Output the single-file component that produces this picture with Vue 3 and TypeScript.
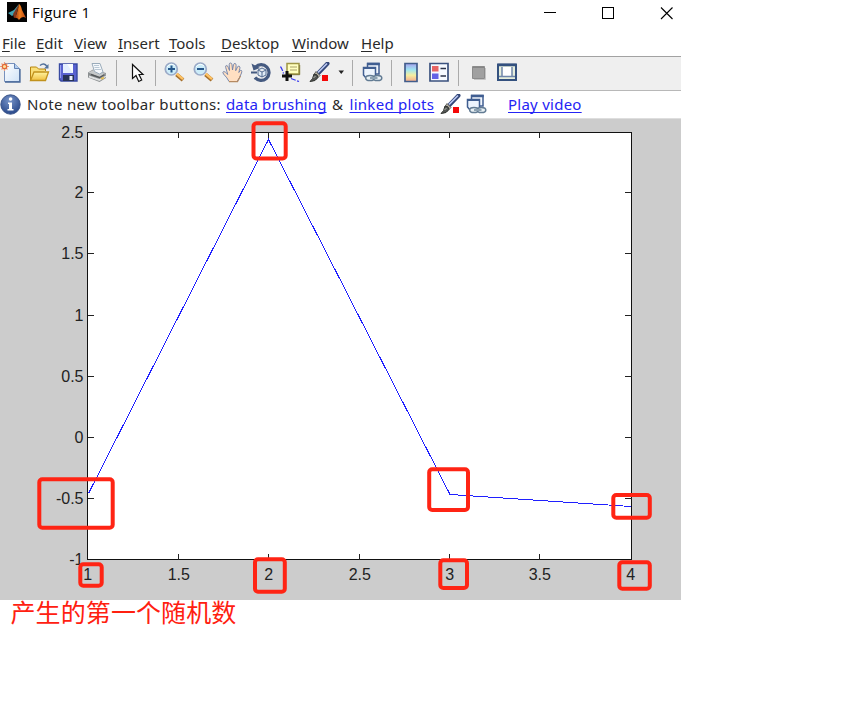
<script setup lang="ts">
interface Tool { id: string; w: number; sep?: boolean }
interface Mark { x: number; y: number; x2: number; y2: number }

const menus = [
  { label: 'File', w: 34 }, { label: 'Edit', w: 38 }, { label: 'View', w: 44 },
  { label: 'Insert', w: 51 }, { label: 'Tools', w: 52 }, { label: 'Desktop', w: 71 },
  { label: 'Window', w: 69 }, { label: 'Help', w: 40 },
]
const tools: Tool[] = [
  { id: 'new', w: 29 }, { id: 'open', w: 29 }, { id: 'save', w: 29 }, { id: 'print', w: 28 },
  { id: 's1', w: 12, sep: true }, { id: 'arrow', w: 27 }, { id: 's2', w: 10, sep: true },
  { id: 'zoomin', w: 29 }, { id: 'zoomout', w: 29 }, { id: 'hand', w: 29 }, { id: 'rotate', w: 29 },
  { id: 'cursor', w: 29 }, { id: 'brush', w: 29 }, { id: 'caret', w: 13 },
  { id: 's3', w: 11, sep: true }, { id: 'link', w: 28 }, { id: 's4', w: 10, sep: true },
  { id: 'colorbar', w: 29 }, { id: 'legend', w: 28 }, { id: 's5', w: 11, sep: true },
  { id: 'hide', w: 29 }, { id: 'dock', w: 29 },
]
const left = 87.5, right = 631.5, top = 132.5, bottom = 559.5
const xTicks = [
  { v: '1', x: 87.5 }, { v: '1.5', x: 178.5 }, { v: '2', x: 268.5 }, { v: '2.5', x: 359.5 },
  { v: '3', x: 449.5 }, { v: '3.5', x: 539.5 }, { v: '4', x: 630.5 },
]
const yTicks = [
  { v: '2.5', y: 132.5 }, { v: '2', y: 192.5 }, { v: '1.5', y: 253.5 }, { v: '1', y: 315.5 },
  { v: '0.5', y: 376.5 }, { v: '0', y: 437.5 }, { v: '-0.5', y: 498.5 }, { v: '-1', y: 559.5 },
]
const line = '88.5,493.5 268.5,139.5 450,494.5 631,506.5'
const marks: Mark[] = [
  { x: 251.5, y: 121.3, x2: 287.7, y2: 160.5 },
  { x: 37.3, y: 477.3, x2: 114.7, y2: 529.7 },
  { x: 78.3, y: 562.3, x2: 103.7, y2: 587.7 },
  { x: 253, y: 557.3, x2: 286.8, y2: 593.7 },
  { x: 427.2, y: 467.2, x2: 470, y2: 512 },
  { x: 611.3, y: 493, x2: 651.8, y2: 519.8 },
  { x: 438.3, y: 558.3, x2: 469, y2: 590 },
  { x: 617.3, y: 560.3, x2: 651.8, y2: 590.8 },
]
</script>

<template>
  <svg class="defs" width="0" height="0">
    <defs>
      <linearGradient id="g-blade" x1="0" x2="1"><stop offset="0" stop-color="#8c2a10" /><stop offset=".5" stop-color="#f0801e" /><stop offset="1" stop-color="#b8400e" /></linearGradient>
      <linearGradient id="g-paper" x1="0" y1="0" x2="1" y2="1"><stop offset="0" stop-color="#fff" /><stop offset="1" stop-color="#cfe2f7" /></linearGradient>
      <linearGradient id="g-folder" x1="0" y1="0" x2="0" y2="1"><stop offset="0" stop-color="#fff3a0" /><stop offset="1" stop-color="#f0c040" /></linearGradient>
      <linearGradient id="g-bar" x1="0" y1="0" x2="0" y2="1"><stop offset="0" stop-color="#a7a2ee" /><stop offset=".35" stop-color="#9fe6f2" /><stop offset=".65" stop-color="#f6efa0" /><stop offset="1" stop-color="#f5a98c" /></linearGradient>
      <radialGradient id="g-info" cx=".45" cy=".3" r=".7"><stop offset="0" stop-color="#7693c8" /><stop offset="1" stop-color="#29488a" /></radialGradient>
      <symbol id="new" viewBox="0 0 21 21">
        <path d="M4.5 1.5h10l5 5v13h-15z" fill="url(#g-paper)" stroke="#7791bd" /><path d="M20 7v13H5" fill="none" stroke="#486899" stroke-width="1.3" /><path d="M14.5 1.5v5h5" fill="#b3ceed" stroke="#6382b4" />
        <path d="M4.500 0v9M0 4.5h9M1.500 1.500l6 6M7.500 1.500l-6 6" stroke="#eea07e" stroke-width="1.2" /><circle cx="4.500" cy="4.500" r="2.200" fill="#ffe09a" stroke="#e0693a" stroke-width="1.300" />
      </symbol>
      <symbol id="open" viewBox="0 0 21 21">
        <path d="M1.500 18V5h6l2 2h7V9" fill="#f9df79" stroke="#b8860f" /><path d="M1.500 18.500L5 10h14.500l-3 8.500z" fill="url(#g-folder)" stroke="#c1921d" stroke-width="1.3" />
        <path d="M11 3.500q4-3.500 7 1" fill="none" stroke="#54739d" stroke-width="1.4" /><path d="M19.500 2v4.500H15z" fill="#54739d" />
      </symbol>
      <symbol id="save" viewBox="0 0 21 21">
        <path d="M1.5 2h17.5v17H3l-1.5-1.5z" fill="#5962d0" stroke="#384aa2" stroke-width="1.4" /><path d="M5 2h10v9H5z" fill="#e4efff" /><path d="M9 2h6v9z" fill="#fafdff" /><path d="M5 13h11v6H5z" fill="#273357" /><path d="M11.5 14h3v4h-3z" fill="#eef2fc" /><path d="M2.5 3v13" stroke="#979ff0" />
      </symbol>
      <symbol id="print" viewBox="0 0 21 21">
        <path d="M1 10.500l5-3 13 3.500v5l-6.500 4L1 15.500z" fill="#8b8f91" /><path d="M1.500 10.500l5-2.500 12.500 4-6 3.500z" fill="#c6c9ca" /><path d="M5 1.500h8l3 8.500-3.500 2L7.500 9.500z" fill="#f6f9fc" stroke="#9aabba" /><path d="M7 3.500h5M7.500 5.500h5M8 7.500h6" stroke="#b9c8d5" />
        <path d="M2 13.500l10.500 3.500 6.500-3.500v1.500L12.500 19 2 15.500z" fill="#dfe1e2" /><path d="M4 12.500l8.500 3 5-3" fill="none" stroke="#55595b" stroke-width="1.400" /><path d="M14 17l3-1.500" stroke="#e6bf51" stroke-width="1.600" />
      </symbol>
      <symbol id="arrow" viewBox="0 0 21 21"><path d="M5.5 2.5v14l3.5-3 2.7 6 3-1.5-2.7-5.500h4z" fill="#fff" stroke="#111" stroke-width="1.2" /></symbol>
      <symbol id="lens" viewBox="0 0 21 21">
        <path d="M12.5 12.5l6.500 5.500" stroke="#a66f2b" stroke-width="4" /><path d="M12.500 11.7l6.500 5.500" stroke="#ffc364" stroke-width="2.400" /><circle cx="7.3" cy="7" r="6" fill="#ccecf9" stroke="#9baac7" stroke-width="1.7" /><path d="M3 5q4-5 8-1" stroke="#f6ffff" fill="none" />
      </symbol>
      <symbol id="zoomin" viewBox="0 0 21 21"><use href="#lens" width="21" height="21" /><path d="M4 7h7M7.5 3.5v7" stroke="#27588c" stroke-width="2" /></symbol>
      <symbol id="zoomout" viewBox="0 0 21 21"><use href="#lens" width="21" height="21" /><path d="M4 7h7" stroke="#27588c" stroke-width="2" /></symbol>
      <symbol id="hand" viewBox="0 0 21 21"><path d="M7 19.500Q5.500 16 1.500 12q-1.500-2.200.3-2.500 1.400 0 4 3L3.700 5.500Q3.300 3.300 4.800 3.500q1 .2 1.500 2L7.500 8.500 7.200 2.500q.2-1.700 1.400-1.500 1.200 0 1.400 1.800L10.500 8 11.500 2.700q.4-1.500 1.600-1.200 1.200.3 1 2L13.700 8.700 15.500 5q.7-1.300 1.700-.8 1.100.6.7 2L16.800 10.500l1-1.500q1-1.200 1.700-.5.600.8 0 2.500L17.500 15.500 15 19.500z" fill="#ffdfc2" stroke="#6d7fa6" stroke-width=".9" /><path d="M7 19.700h8.500l3-5.700" fill="none" stroke="#b58a62" stroke-width="1.200" /></symbol>
      <symbol id="rotate" viewBox="0 0 21 21">
        <path d="M4.500 5A7.900 7.900 0 1 1 4 15.500" fill="none" stroke="#455a80" stroke-width="3.200" /><path d="M.5 1.500l2 7 6.500-2.500z" fill="#455a80" /><path d="M0 10.500h6" stroke="#455a80" stroke-width="2" /><path d="M11 6l4 2v5l-4 2-4-2V8zM7 8l4 2 4-2M11 10v5" fill="#e0ebf5" stroke="#526a90" />
      </symbol>
      <symbol id="cursor" viewBox="0 0 21 21">
        <path d="M.500 4.500q2 3 3 7M11 16.500l8 3" stroke="#3434f0" fill="none" stroke-width="1.3" stroke-dasharray="5 1.500" /><path d="M7 1.500h12v10.500h-12z" fill="#ffffbf" stroke="#9f9646" stroke-width="1.5" /><path d="M19.700 3v9.700H8" fill="none" stroke="#827a39" /><path d="M10 5h7M10 8h7" stroke="#a9a06a" /><path d="M7 9v10M2 14h10" stroke="#111" stroke-width="3" />
      </symbol>
      <symbol id="brush" viewBox="0 0 21 21">
        <path d="M8.500 12L18.500 1.500" stroke="#324577" stroke-width="4" stroke-linecap="round" /><path d="M9 10.500L18 1.500" stroke="#bac8f2" stroke-width="1.7" /><path d="M7 9.500l4 4-2 2-4-3z" fill="#b9b4a5" stroke="#686864" /><path d="M5 12q4 0 4 3.500-2 4-8 4 3-2 4-7.500z" fill="#535654" stroke="#30332f" /><path d="M4.500 16l2-2" stroke="#b0b5a9" /><path d="M13 13h6v6h-6z" fill="#f40808" />
      </symbol>
      <symbol id="caret" viewBox="0 0 21 21"><path d="M.5 8.500h5.500l-2.750 3.500z" fill="#222" /></symbol>
      <symbol id="link" viewBox="0 0 21 21">
        <path d="M5.500 1.500H17V12H5.500z" fill="#f1f6fc" stroke="#405e91" stroke-width="1.5" /><path d="M5 2h12.700" stroke="#405e91" stroke-width="2.500" /><path d="M1.500 5.500h12V16H4l-2.500-3z" fill="#edf4fd" stroke="#405e91" stroke-width="1.5" /><path d="M1 6h12" stroke="#405e91" stroke-width="2" />
        <ellipse cx="8" cy="16" rx="4.300" ry="2.600" fill="#e8f0f4" stroke="#627b93" stroke-width="1.500" /><ellipse cx="15.500" cy="16" rx="4.300" ry="2.600" fill="#e8f0f4" stroke="#627b93" stroke-width="1.500" /><path d="M8 16h7.500" stroke="#8da2b2" stroke-width="2" />
      </symbol>
      <symbol id="colorbar" viewBox="0 0 21 21"><path d="M5 1.500h12v18H5z" fill="url(#g-bar)" stroke="#425d8c" stroke-width="1.7" /></symbol>
      <symbol id="legend" viewBox="0 0 21 21"><path d="M1 1.500h18v17.500H1z" fill="#f5f9ff" stroke="#3b527f" stroke-width="1.700" /><path d="M3 4h6.500v5.500H3z" fill="#e66464" /><path d="M3 11.500h6.500V17H3z" fill="#6262e6" /><path d="M11.500 6.500H17M11.500 14H17" stroke="#293148" stroke-width="1.500" /></symbol>
      <symbol id="hide" viewBox="0 0 21 21"><path d="M4.500 4.500h12v12h-12z" fill="#a0a0a0" stroke="#8b8b8b" /><path d="M17.500 6v11.500H6" fill="none" stroke="#c4c4c4" /><path d="M5 5.500h11" stroke="#858585" /></symbol>
      <symbol id="dock" viewBox="0 0 21 21"><path d="M1 2.500h18v15.500H1z" fill="#e7efdc" stroke="#34517f" stroke-width="2" /><path d="M1 3h18" stroke="#34517f" stroke-width="2.500" /><path d="M5 5v9.500h10V5M2 14.500h16" fill="#fff" stroke="#7188ab" stroke-width="1.500" /></symbol>
    </defs>
  </svg>

  <main class="page">
    <section class="window">
      <header class="title">
        <svg class="logo" viewBox="0 0 20 20"><path d="M0 0h20v20H0z" fill="#030303" /><path d="M1 11l6-3 5-6-3 9-4 3z" fill="#42a2b1" /><path d="M6 12l3-5 3-5-3 12-2 2z" fill="#803920" /><path d="M12 2q2 1 3 6l4 8q-4-3-7 2-2-3-5-2 3-2 5-14z" fill="url(#g-blade)" /></svg>
        <span class="caption">Figure 1</span>
        <svg class="controls" viewBox="0 0 137 26" fill="none" stroke="#000"><path d="M0 12.500h12M58.500 7.500h11v11h-11z" shape-rendering="crispEdges" /><path d="M117 7.500l11.500 11.500M128.500 7.500L117 19" stroke-width="1.100" /></svg>
      </header>
      <nav class="menu">
        <span v-for="m in menus" :key="m.label" class="menu-item" :style="{ width: m.w + 'px' }"><u>{{ m.label[0] }}</u>{{ m.label.slice(1) }}</span>
      </nav>
      <div class="toolbar">
        <div v-for="t in tools" :key="t.id" class="slot" :style="{ width: t.w + 'px' }">
          <i v-if="t.sep" class="sep" />
          <svg v-else class="icon"><use :href="'#' + t.id" /></svg>
        </div>
      </div>
      <div class="note">
        <svg class="info" viewBox="0 0 21 21"><circle cx="10.500" cy="10.500" r="9.700" fill="url(#g-info)" stroke="#3a5489" /><circle cx="10.600" cy="5" r="1.800" fill="#fff" /><path d="M8 8.500h4v6.500h1.500v1.500h-6V15H9v-5H8z" fill="#fff" /></svg>
        <span class="msg">Note new toolbar buttons:</span>
        <a class="l1">data brushing</a><span class="amp">&amp;</span><a class="l2">linked plots</a>
        <svg class="icon brush"><use href="#brush" /></svg>
        <svg class="icon chain"><use href="#link" /></svg>
        <a class="l3">Play video</a>
      </div>
      <svg class="figure" viewBox="0 118 681 482">
        <rect x="0" y="118" width="681" height="482" fill="#ccc" />
        <path d="M0 118.500h681" stroke="#dedede" />
        <rect :x="left" :y="top" :width="right - left" :height="bottom - top" fill="#fff" stroke="#111" shape-rendering="crispEdges" />
        <g class="ticks">
          <path v-for="t in xTicks.slice(1, 6)" :key="t.v" :d="`M${t.x} ${top}v5.500M${t.x} ${bottom}v-6`" />
          <path v-for="t in yTicks.slice(1, 7)" :key="t.v" :d="`M${left} ${t.y}h6.500M${right} ${t.y}h-6.500`" />
        </g>
        <g class="labels">
          <text v-for="t in xTicks" :key="t.v" :x="t.x + 0.3" y="579.500" text-anchor="middle">{{ t.v }}</text>
          <text v-for="t in yTicks" :key="t.v" x="83.500" :y="t.y + 5.4" text-anchor="end">{{ t.v }}</text>
        </g>
        <polyline :points="line" class="series" />
        <rect v-for="(m, i) in marks" :key="i" class="mark" :x="m.x + 2" :y="m.y + 2" :width="m.x2 - m.x - 4" :height="m.y2 - m.y - 4" rx="3" />
      </svg>
    </section>
    <p class="remark">产生的第一个随机数</p>
  </main>
</template>

<style>
body { margin: 0; background: #fff; }
</style>
<style scoped>
.defs { position: absolute; }
.page { width: 847px; height: 708px; overflow: hidden; background: #fff; }
.window { width: 681px; height: 600px; display: flex; flex-direction: column; font-family: "Noto Sans", sans-serif; color: #2a2a2a; }
.title { height: 30px; display: flex; align-items: flex-start; }
.logo { width: 20px; height: 20px; margin: 2px 0 0 7px; }
.caption { width: 512px; padding-left: 5px; box-sizing: border-box; font: 15px/25px "Open Sans", sans-serif; letter-spacing: .3px; color: #000; }
.controls { width: 137px; height: 26px; margin-left: 5px; }
.menu { height: 26px; display: flex; box-sizing: border-box; padding-left: 2px; font-size: 15px; line-height: 27px; white-space: nowrap; }
.menu-item { flex: none; }
.menu-item u { text-underline-offset: 2px; text-decoration-thickness: 1px; text-decoration-skip-ink: none; }
.toolbar { height: 35px; box-sizing: border-box; display: flex; align-items: center; background: #efefef; border-top: 1px solid #a2a2a2; border-bottom: 1px solid #b8b8b8; padding-bottom: 2px; }
.slot { flex: none; height: 26px; display: flex; align-items: center; }
.icon { width: 21px; height: 21px; flex: none; overflow: visible; }
.sep { width: 1px; height: 26px; margin-left: 1px; background: #aaa; }
.note { height: 27px; display: flex; align-items: center; background: #fff; font-size: 15px; line-height: 27px; white-space: nowrap; }
.info { width: 21px; height: 21px; flex: none; }
.msg { width: 199px; margin-left: 6px; flex: none; letter-spacing: .34px; }
a { color: #2424f4; text-decoration: underline; text-underline-offset: 2px; text-decoration-thickness: 1px; text-decoration-skip-ink: none; flex: none; }
.l1 { width: 106px; letter-spacing: .13px; }
.amp { width: 17.500px; flex: none; }
.l2 { width: 85px; letter-spacing: .28px; }
.brush { margin-left: 5px; }
.chain { margin-left: 5px; }
.l3 { margin-left: 21.500px; letter-spacing: .25px; }
.figure { width: 681px; height: 482px; display: block; flex: none; }
.ticks { stroke: #222; fill: none; shape-rendering: crispEdges; }
.labels { font: 16px "Liberation Sans", sans-serif; fill: #222; }
.series { fill: none; stroke: #2020ff; stroke-width: 1; shape-rendering: crispEdges; }
.mark { fill: none; stroke: #ff2414; stroke-width: 4; }
.remark { margin: 0; padding-left: 10.5px; font: 400 25px/22px "Noto Sans CJK SC", sans-serif; letter-spacing: .1px; color: #ff2010; }
</style>
